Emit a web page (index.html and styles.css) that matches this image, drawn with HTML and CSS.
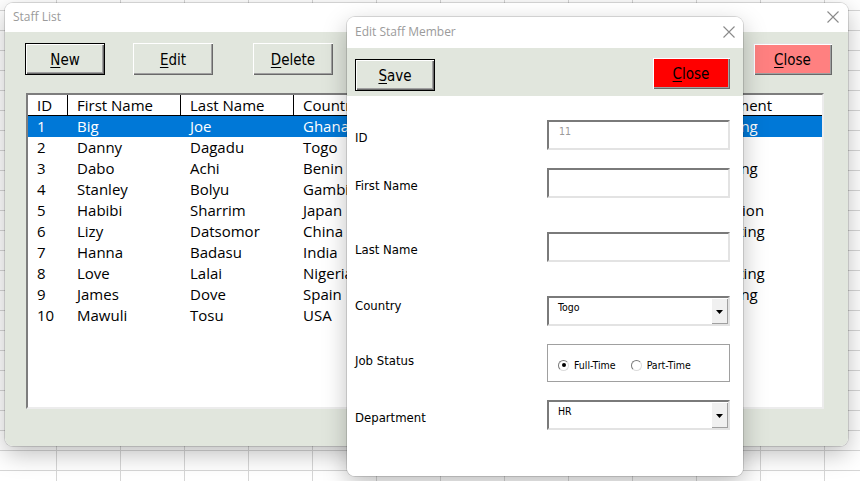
FILE: index.html
```html
<!DOCTYPE html>
<html>
<head>
<meta charset="utf-8">
<title>Staff List</title>
<link rel="stylesheet" href="styles.css">
</head>
<body>
<div class="desk">
  <div class="win main-win">
    <div class="titlebar">
      <span class="title">Staff List</span>
      <svg class="xicon" width="12" height="12" viewBox="0 0 12 12"><path d="M0.5 0.5 L11.5 11.5 M11.5 0.5 L0.5 11.5" stroke="#8a8a8a" stroke-width="1.1" fill="none"/></svg>
    </div>
    <div class="client">
      <div class="toolbar">
        <button class="btn default"><u>N</u>ew</button>
        <button class="btn gap-edit"><u>E</u>dit</button>
        <button class="btn gap-del"><u>D</u>elete</button>
        <button class="btn pink close-main"><u>C</u>lose</button>
      </div>
      <div class="listbox">
        <div class="lrow head">
          <span class="c div">ID</span><span class="c div">First Name</span><span class="c div">Last Name</span><span class="c div">Country</span><span class="c div">Job Status</span><span class="c">Department</span>
        </div>
        <div class="lrow sel"><span class="c">1</span><span class="c">Big</span><span class="c">Joe</span><span class="c">Ghana</span><span class="c">Full-Time</span><span class="c">Marketing</span></div>
        <div class="lrow"><span class="c">2</span><span class="c">Danny</span><span class="c">Dagadu</span><span class="c">Togo</span><span class="c">Full-Time</span><span class="c">HR</span></div>
        <div class="lrow"><span class="c">3</span><span class="c">Dabo</span><span class="c">Achi</span><span class="c">Benin</span><span class="c">Part-Time</span><span class="c">Marketing</span></div>
        <div class="lrow"><span class="c">4</span><span class="c">Stanley</span><span class="c">Bolyu</span><span class="c">Gambia</span><span class="c">Full-Time</span><span class="c">IT</span></div>
        <div class="lrow"><span class="c">5</span><span class="c">Habibi</span><span class="c">Sharrim</span><span class="c">Japan</span><span class="c">Full-Time</span><span class="c">Production</span></div>
        <div class="lrow"><span class="c">6</span><span class="c">Lizy</span><span class="c">Datsomor</span><span class="c">China</span><span class="c">Part-Time</span><span class="c">Accounting</span></div>
        <div class="lrow"><span class="c">7</span><span class="c">Hanna</span><span class="c">Badasu</span><span class="c">India</span><span class="c">Full-Time</span><span class="c">Sales</span></div>
        <div class="lrow"><span class="c">8</span><span class="c">Love</span><span class="c">Lalai</span><span class="c">Nigeria</span><span class="c">Full-Time</span><span class="c">Accounting</span></div>
        <div class="lrow"><span class="c">9</span><span class="c">James</span><span class="c">Dove</span><span class="c">Spain</span><span class="c">Part-Time</span><span class="c">Marketing</span></div>
        <div class="lrow"><span class="c">10</span><span class="c">Mawuli</span><span class="c">Tosu</span><span class="c">USA</span><span class="c">Full-Time</span><span class="c">HR</span></div>
      </div>
    </div>
  </div>

  <div class="win dialog">
    <div class="titlebar dtitle">
      <span class="title">Edit Staff Member</span>
      <svg class="xicon" width="12" height="12" viewBox="0 0 12 12"><path d="M0.5 0.5 L11.5 11.5 M11.5 0.5 L0.5 11.5" stroke="#8a8a8a" stroke-width="1.1" fill="none"/></svg>
    </div>
    <div class="dtoolbar">
      <button class="btn default save"><u>S</u>ave</button>
      <button class="btn red"><u>C</u>lose</button>
    </div>
    <div class="form">
      <div class="frow">
        <span class="lbl">ID</span>
        <div class="field disabled">11</div>
      </div>
      <div class="frow gap-s">
        <span class="lbl">First Name</span>
        <div class="field"></div>
      </div>
      <div class="frow gap-l">
        <span class="lbl">Last Name</span>
        <div class="field"></div>
      </div>
      <div class="frow gap-l">
        <span class="lbl lbl-top">Country</span>
        <div class="field combo"><span class="val">Togo</span><span class="drop"><svg width="7" height="4" viewBox="0 0 7 4"><path d="M0 0 H7 L3.5 4 Z" fill="#000"/></svg></span></div>
      </div>
      <div class="frow gap-s">
        <span class="lbl lbl-job">Job Status</span>
        <div class="frame">
          <span class="radio on"></span><span class="rtext">Full-Time</span>
          <span class="radio second"></span><span class="rtext">Part-Time</span>
        </div>
      </div>
      <div class="frow gap-s">
        <span class="lbl">Department</span>
        <div class="field combo"><span class="val">HR</span><span class="drop"><svg width="7" height="4" viewBox="0 0 7 4"><path d="M0 0 H7 L3.5 4 Z" fill="#000"/></svg></span></div>
      </div>
    </div>
  </div>
</div>
</body>
</html>
```

FILE: styles.css
```css
* { box-sizing: border-box; }
html, body { margin: 0; padding: 0; }
body { width: 860px; height: 481px; overflow: hidden; }

.desk {
  position: relative;
  width: 860px;
  height: 481px;
  overflow: hidden;
  background-color: #ffffff;
  background-image:
    linear-gradient(to right, #d6d6d6 1px, transparent 1px),
    linear-gradient(to bottom, #d6d6d6 1px, transparent 1px);
  background-size: 64px 20px;
  background-position: 56px 10px;
}

.win {
  position: absolute;
  border-radius: 8px;
  overflow: hidden;
  background: #ffffff;
  display: flex;
  flex-direction: column;
  box-shadow: 0 0 0 1px rgba(0,0,0,0.13), 0 8px 24px rgba(0,0,0,0.26);
}

.main-win { left: 5px; top: 3px; width: 843px; height: 443px; }
.dialog { left: 347px; top: 17px; width: 396px; height: 459px; }

.titlebar {
  height: 29px;
  flex: none;
  display: flex;
  align-items: center;
  justify-content: space-between;
  padding: 0 9px 2px 8px;
  background: #ffffff;
}
.dtitle { height: 31px; padding-right: 8px; }
.title {
  font-family: "Open Sans", "Noto Sans", sans-serif;
  font-size: 12px;
  color: #9b9b9b;
}
.xicon { display: block; }

.client {
  flex: 1;
  background: #e1e6dd;
  display: flex;
  flex-direction: column;
}

.toolbar {
  display: flex;
  padding: 11px 16px 0 20px;
}

.btn {
  height: 32px;
  width: 80px;
  padding: 1px 0 0;
  margin: 0;
  border: none;
  background: #e1e6dd;
  color: #000;
  font-family: "DejaVu Sans Condensed", "Liberation Sans", sans-serif;
  font-stretch: condensed;
  font-size: 15px;
  box-shadow: inset 1px 1px #ffffff, inset -1px -1px #696969, inset -2px -2px #a0a0a0;
}
.btn u { text-decoration-thickness: 1px; text-underline-offset: 2px; }
.btn.default {
  box-shadow: inset 0 0 0 1px #000, inset 2px 2px #ffffff, inset -2px -2px #696969, inset -3px -3px #a0a0a0;
}
.gap-edit { margin-left: 28px; }
.gap-del { margin-left: 40px; }
.btn.pink {
  background: #ff8080;
  width: 79px;
  margin-left: auto;
  box-shadow: inset 1px 1px #e3e3e3, inset 2px 2px #ffffff, inset -1px -1px #696969, inset -2px -2px #a0a0a0;
}

.listbox {
  margin: 18px 0 0 21px;
  width: 798px;
  height: 316px;
  background: #ffffff;
  border: 2px solid;
  border-color: #7d7d7d #ececec #ececec #7d7d7d;
  font-family: "Open Sans", "Noto Sans", sans-serif;
  font-size: 15px;
  color: #000;
  overflow: hidden;
}

.lrow {
  display: grid;
  grid-template-columns: 40px 113px 113px 192px 192px 1fr;
  height: 21px;
  line-height: 21px;
  white-space: nowrap;
}
.lrow.head { height: 21px; border-bottom: 1px solid #000; line-height: 20px; }
.c { padding-left: 9px; overflow: hidden; }
.head .c.div { border-right: 1px solid #000; }
.lrow.sel { background: #0078d7; color: #ffffff; }

/* dialog */
.dtoolbar {
  height: 48px;
  flex: none;
  background: #e1e6dd;
  display: flex;
  justify-content: space-between;
  align-items: flex-start;
  padding: 9px 13px 0 8px;
}
.save { margin-top: 2px; }
.btn.red {
  background: #ff0000;
  width: 78px;
  box-shadow: inset 1px 1px #e3e3e3, inset 2px 2px #ffffff, inset -1px -1px #696969, inset -2px -2px #a0a0a0;
}

.form {
  flex: 1;
  background: #ffffff;
  padding: 24px 0 0 8px;
  font-family: "DejaVu Sans Condensed", "Liberation Sans", sans-serif;
  font-stretch: condensed;
}

.frow {
  display: grid;
  grid-template-columns: 192px 183px;
  align-items: center;
}
.gap-s { margin-top: 18px; }
.gap-l { margin-top: 34px; }

.lbl {
  font-size: 13px;
  color: #000;
  padding-top: 4px;
}
.lbl-top { align-self: start; padding-top: 2px; }
.lbl-job { align-self: start; padding-top: 9px; }

.field {
  height: 30px;
  border: 2px solid;
  border-color: #7a7a7a #e3e3e3 #e3e3e3 #7a7a7a;
  background: #ffffff;
  font-size: 10.5px;
  line-height: 13px;
  padding: 3px 0 0 10px;
  color: #000;
}
.field.disabled { color: #9a9a9a; }

.combo {
  display: flex;
  justify-content: space-between;
  padding: 0 0 0 9px;
}
.combo .val { padding-top: 3px; }
.drop {
  width: 17px;
  height: 26px;
  background: #f0f0f0;
  display: flex;
  align-items: center;
  justify-content: center;
  box-shadow: inset 1px 1px #ffffff, inset -1px -1px #a0a0a0;
  padding-top: 1px;
}
.drop svg { display: block; }

.frame {
  height: 38px;
  border: 1px solid #a0a0a0;
  display: flex;
  align-items: center;
  padding: 4px 0 0 10px;
  font-size: 10.5px;
  color: #000;
}
.radio {
  width: 11px;
  height: 11px;
  border-radius: 50%;
  border: 1px solid;
  border-color: #7a7a7a #dcdcdc #dcdcdc #7a7a7a;
  background: #ffffff;
  display: flex;
  align-items: center;
  justify-content: center;
  flex: none;
}
.radio.on::after {
  content: "";
  width: 4px;
  height: 4px;
  border-radius: 50%;
  background: #000;
}
.radio.second { margin-left: 15px; }
.rtext { margin-left: 5px; }
```
